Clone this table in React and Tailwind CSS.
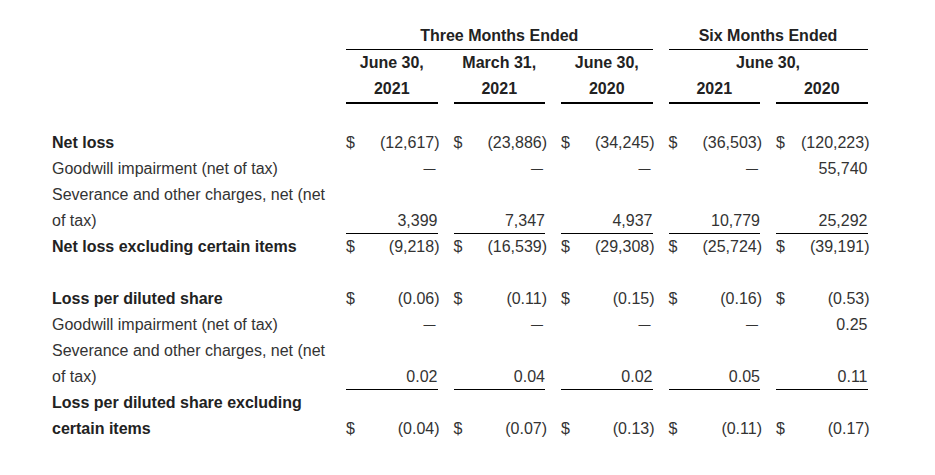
import React from "react";

const GRID = "grid grid-cols-[278px_repeat(5,91.5px)] gap-x-4";

const netLoss = [
  { label: "Net loss", bold: true, dollar: true, vals: ["(12,617)", "(23,886)", "(34,245)", "(36,503)", "(120,223)"] },
  { label: "Goodwill impairment (net of tax)", vals: ["—", "—", "—", "—", "55,740"] },
  { label: "Severance and other charges, net (net of tax)", underline: true, vals: ["3,399", "7,347", "4,937", "10,779", "25,292"] },
  { label: "Net loss excluding certain items", bold: true, dollar: true, vals: ["(9,218)", "(16,539)", "(29,308)", "(25,724)", "(39,191)"] },
];

const perShare = [
  { label: "Loss per diluted share", bold: true, dollar: true, vals: ["(0.06)", "(0.11)", "(0.15)", "(0.16)", "(0.53)"] },
  { label: "Goodwill impairment (net of tax)", vals: ["—", "—", "—", "—", "0.25"] },
  { label: "Severance and other charges, net (net of tax)", underline: true, vals: ["0.02", "0.04", "0.02", "0.05", "0.11"] },
  { label: "Loss per diluted share excluding certain items", bold: true, dollar: true, vals: ["(0.04)", "(0.07)", "(0.13)", "(0.11)", "(0.17)"] },
];

function Amount({ v }) {
  if (v === "—") {
    return <span className="text-[12px] mr-[2px]">—</span>;
  }
  if (v.startsWith("(")) {
    // the closing paren hangs past the column edge, like the SEC tables do
    return (
      <span>
        {v.slice(0, -1)}
        <span className="-mr-[2px]">)</span>
      </span>
    );
  }
  return <span>{v}</span>;
}

function Row({ row }) {
  return (
    <div className={`${GRID} items-end`}>
      <div className={row.bold ? "font-bold text-[#222]" : ""}>{row.label}</div>
      {row.vals.map((v, i) => (
        <div
          key={i}
          className={`flex h-[26px] items-center justify-between ${row.underline ? "border-b border-black" : ""}`}
        >
          <span>{row.dollar ? "$" : ""}</span>
          <Amount v={v} />
        </div>
      ))}
    </div>
  );
}

export default function App() {
  return (
    <div className="min-h-screen bg-white pl-[52px] pt-[23px] text-[16px] leading-[26px] text-[#333] font-['Liberation_Sans',Arial,sans-serif]">
      {/* column headers */}
      <div className={`${GRID} font-bold text-[#222]`}>
        <div />
        <div className="col-span-3 border-b border-black text-center">Three Months Ended</div>
        <div className="col-span-2 border-b border-black text-center">Six Months Ended</div>

        <div />
        <div className="text-center">June 30,</div>
        <div className="text-center">March 31,</div>
        <div className="text-center">June 30,</div>
        <div className="col-span-2 text-center">June 30,</div>

        <div />
        {["2021", "2021", "2020", "2021", "2020"].map((y, i) => (
          <div key={i} className="border-b-2 border-black text-center">
            {y}
          </div>
        ))}
      </div>

      <div className="mt-[26px]">
        {netLoss.map((r, i) => (
          <Row key={i} row={r} />
        ))}
      </div>

      <div className="mt-[26px]">
        {perShare.map((r, i) => (
          <Row key={i} row={r} />
        ))}
      </div>
    </div>
  );
}
